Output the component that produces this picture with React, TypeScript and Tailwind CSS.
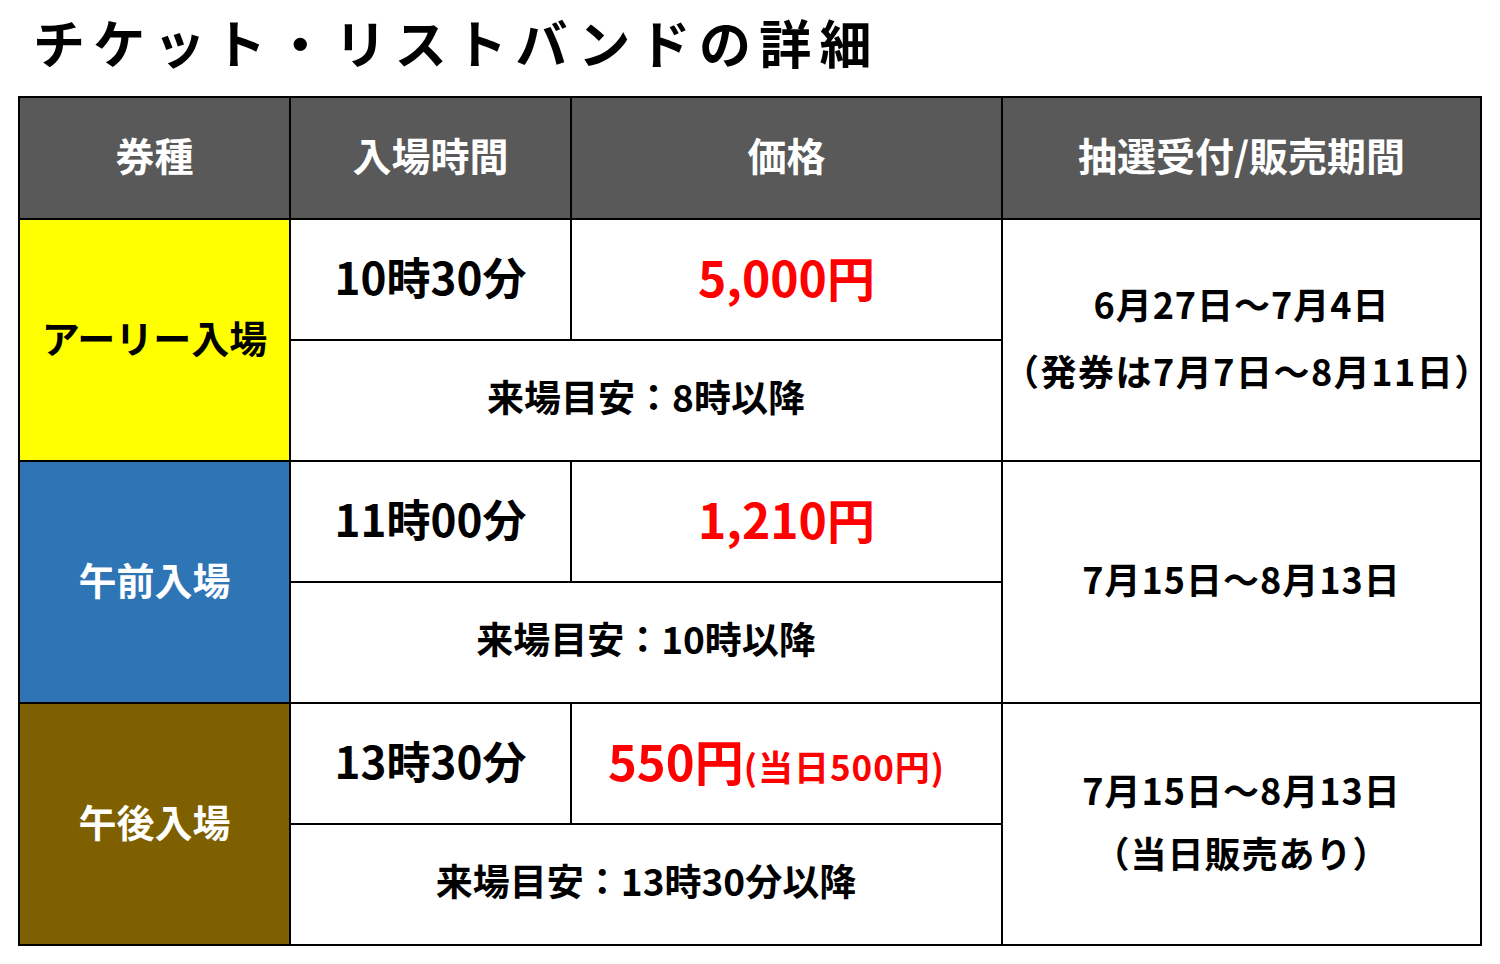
const font = {
  fontFamily: '"Noto Sans CJK JP", "Noto Sans", sans-serif',
}

type Row = {
  label: string
  labelClass: string
  time: string
  price: React.ReactNode
  guide: string
  period: React.ReactNode
}

const rows: Row[] = [
  {
    label: 'アーリー入場',
    labelClass: 'bg-[#ffff00] text-black',
    time: '10時30分',
    price: <span className="text-[48px] text-[#ff0000]">5,000円</span>,
    guide: '来場目安：8時以降',
    period: (
      <div className="flex flex-col items-center gap-[23px] leading-[44px]">
        <span className="tracking-[1px]">6月27日～7月4日</span>
        <span className="tracking-[1.5px]">（発券は7月7日～8月11日）</span>
      </div>
    ),
  },
  {
    label: '午前入場',
    labelClass: 'bg-[#2e75b6] text-white',
    time: '11時00分',
    price: <span className="text-[48px] text-[#ff0000]">1,210円</span>,
    guide: '来場目安：10時以降',
    period: <span className="tracking-[1px]">7月15日～8月13日</span>,
  },
  {
    label: '午後入場',
    labelClass: 'bg-[#7f6000] text-white',
    time: '13時30分',
    price: (
      <span className="mr-[20px] text-[#ff0000]">
        <span className="text-[49px]">550円</span>
        <span className="text-[35px] tracking-[1px]">(当日500円)</span>
      </span>
    ),
    guide: '来場目安：13時30分以降',
    period: (
      <div className="flex flex-col items-center gap-[19px] leading-[44px]">
        <span className="tracking-[1px]">7月15日～8月13日</span>
        <span className="tracking-[1px]">（当日販売あり）</span>
      </div>
    ),
  },
]

const cell = 'border-2 border-black text-center align-middle p-0 pb-[8px]'

export default function App() {
  return (
    <div className="min-h-[964px] w-[1500px] bg-white" style={font}>
      <h1 className="pl-[33px] pt-[11px] h-[96px] text-[52px] font-bold leading-[62px] tracking-[8.3px] text-black">
        チケット・リストバンドの詳細
      </h1>
      <table className="ml-[18px] w-[1462px] table-fixed border-collapse border-2 border-black font-bold">
        <colgroup>
          <col className="w-[271px]" />
          <col className="w-[281px]" />
          <col className="w-[431px]" />
          <col className="w-[479px]" />
        </colgroup>
        <thead>
          <tr className="h-[122px] bg-[#595959] text-[39px] font-semibold text-white">
            <th className={cell}>券種</th>
            <th className={cell}>入場時間</th>
            <th className={cell}>価格</th>
            <th className={cell}>抽選受付/販売期間</th>
          </tr>
        </thead>
        <tbody className="text-black">
          {rows.map((r) => (
            <>
              <tr key={r.label + 'a'} className="h-[121px]">
                <td rowSpan={2} className={`${cell} ${r.labelClass} text-[38px]`}>
                  {r.label}
                </td>
                <td className={`${cell} text-[44px]`}>{r.time}</td>
                <td className={`${cell} leading-none`}>{r.price}</td>
                <td rowSpan={2} className={`${cell} text-[36px]`}>
                  {r.period}
                </td>
              </tr>
              <tr key={r.label + 'b'} className="h-[121px]">
                <td colSpan={2} className={`${cell} text-[37px]`}>
                  {r.guide}
                </td>
              </tr>
            </>
          ))}
        </tbody>
      </table>
    </div>
  )
}
